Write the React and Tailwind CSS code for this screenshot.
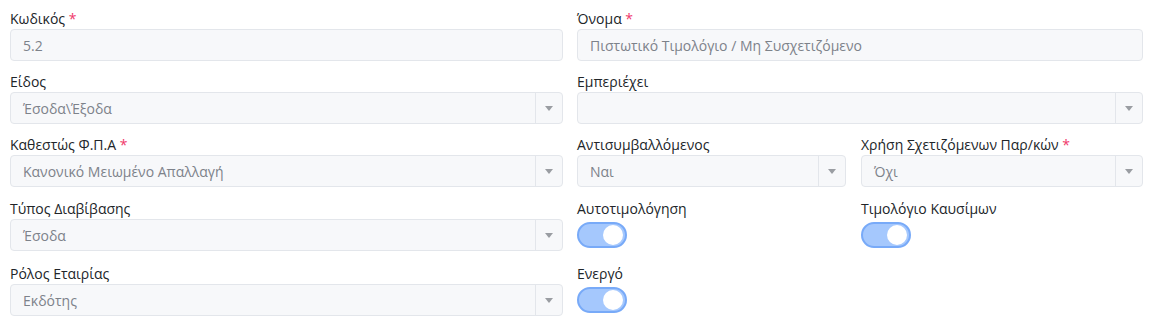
import React from "react";

function Label({ children, required }) {
  return (
    <div className="h-[21px] text-[14px] leading-[21px] text-[#212529] whitespace-nowrap">
      {children}
      {required && <span className="text-[#f0386b]"> *</span>}
    </div>
  );
}

function TextInput({ value }) {
  return (
    <div className="h-[32px] rounded-[4px] border border-[#e3e6eb] bg-[#f7f8fa] px-[12px] flex items-center text-[14px] text-[#7d828a]">
      {value}
    </div>
  );
}

function SelectInput({ value }) {
  return (
    <div className="h-[32px] rounded-[4px] border border-[#e3e6eb] bg-[#f7f8fa] flex items-center text-[14px] text-[#7d828a]">
      <div className="flex-1 px-[12px] truncate">{value}</div>
      <div className="w-[27px] h-full border-l border-[#e3e6eb] flex items-center justify-center">
        <span className="block w-0 h-0 border-l-[4px] border-r-[4px] border-t-[5px] border-l-transparent border-r-transparent border-t-[#9a9da2]" />
      </div>
    </div>
  );
}

function Toggle() {
  return (
    <div className="h-[32px] flex items-center">
      <div className="w-[50px] h-[26px] rounded-full bg-[#a5c8fd] border-2 border-[#78aaf8] flex items-center justify-end pr-[2px]">
        <div className="w-[20px] h-[20px] rounded-full bg-white" />
      </div>
    </div>
  );
}

function Field({ label, required, children, className = "" }) {
  return (
    <div className={className}>
      <Label required={required}>{label}</Label>
      {children}
    </div>
  );
}

export default function App() {
  return (
    <div
      className="w-[1150px] h-[323px] bg-white pl-[10px] pr-[7px] pt-[8px] flex flex-col"
      style={{ fontFamily: '"Open Sans", "Noto Sans", sans-serif' }}
    >
      <div className="flex gap-[14px]">
        <Field label="Κωδικός" required className="w-[553px]">
          <TextInput value="5.2" />
        </Field>
        <Field label="Όνομα" required className="flex-1">
          <TextInput value="Πιστωτικό Τιμολόγιο / Μη Συσχετιζόμενο" />
        </Field>
      </div>

      <div className="flex gap-[14px] mt-[10px]">
        <Field label="Είδος" className="w-[553px]">
          <SelectInput value="Έσοδα\Έξοδα" />
        </Field>
        <Field label="Εμπεριέχει" className="flex-1">
          <SelectInput value="" />
        </Field>
      </div>

      <div className="flex gap-[14px] mt-[10px]">
        <Field label="Καθεστώς Φ.Π.Α" required className="w-[553px]">
          <SelectInput value="Κανονικό Μειωμένο Απαλλαγή" />
        </Field>
        <div className="flex-1 flex gap-[15px]">
          <Field label="Αντισυμβαλλόμενος" className="w-[269px]">
            <SelectInput value="Ναι" />
          </Field>
          <Field label="Χρήση Σχετιζόμενων Παρ/κών" required className="flex-1">
            <SelectInput value="Όχι" />
          </Field>
        </div>
      </div>

      <div className="flex gap-[14px] mt-[11px]">
        <Field label="Τύπος Διαβίβασης" className="w-[553px]">
          <SelectInput value="Έσοδα" />
        </Field>
        <div className="flex-1 flex gap-[15px]">
          <Field label="Αυτοτιμολόγηση" className="w-[269px]">
            <Toggle />
          </Field>
          <Field label="Τιμολόγιο Καυσίμων" className="flex-1">
            <Toggle />
          </Field>
        </div>
      </div>

      <div className="flex gap-[14px] mt-[12px]">
        <Field label="Ρόλος Εταιρίας" className="w-[553px]">
          <SelectInput value="Εκδότης" />
        </Field>
        <div className="flex-1 flex gap-[15px]">
          <Field label="Ενεργό" className="w-[269px]">
            <Toggle />
          </Field>
        </div>
      </div>
    </div>
  );
}
